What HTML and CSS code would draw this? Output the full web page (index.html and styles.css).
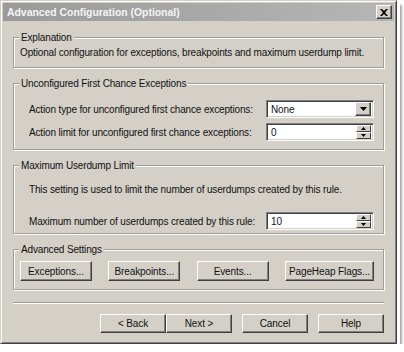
FILE: index.html
```html
<!DOCTYPE html>
<html lang="en">
<head>
    <meta charset="UTF-8">
    <title>Advanced Configuration (Optional)</title>
    <link rel="stylesheet" href="styles.css">
</head>
<body>
    <div class="window">
        <div class="titlebar">
            <span class="titlebar__text">Advanced Configuration (Optional)</span>
            <button class="titlebar__close" aria-label="Close">
                <svg width="8" height="7" viewBox="0 0 8 7"><path d="M0 0h2l2 2 2-2h2L5 3.5 8 7H6L4 5 2 7H0l3-3.5z" fill="#000"/></svg>
            </button>
        </div>

        <div class="dialog">
            <fieldset class="group group--explain">
                <legend>Explanation</legend>
                <div class="group__body">
                    <p class="group__text">Optional configuration for exceptions, breakpoints and maximum userdump limit.</p>
                </div>
            </fieldset>

            <fieldset class="group group--exceptions">
                <legend>Unconfigured First Chance Exceptions</legend>
                <div class="group__body">
                    <div class="form-row">
                        <label>Action type for unconfigured first chance exceptions:</label>
                        <div class="field combo">
                            <span class="field__value">None</span>
                            <span class="combo__btn">
                                <svg width="7" height="4" viewBox="0 0 7 4"><path d="M0 0h7L3.5 4z" fill="#000"/></svg>
                            </span>
                        </div>
                    </div>
                    <div class="form-row">
                        <label>Action limit for unconfigured first chance exceptions:</label>
                        <div class="field spin">
                            <span class="field__value">0</span>
                            <span class="spin__btns">
                                <span class="spin__btn"><svg width="5" height="3" viewBox="0 0 5 3"><path d="M2.5 0L5 3H0z" fill="#000"/></svg></span>
                                <span class="spin__btn"><svg width="5" height="3" viewBox="0 0 5 3"><path d="M0 0h5L2.5 3z" fill="#000"/></svg></span>
                            </span>
                        </div>
                    </div>
                </div>
            </fieldset>

            <fieldset class="group group--userdump">
                <legend>Maximum Userdump Limit</legend>
                <div class="group__body">
                    <p class="group__text">This setting is used to limit the number of userdumps created by this rule.</p>
                    <div class="form-row">
                        <label>Maximum number of userdumps created by this rule:</label>
                        <div class="field spin">
                            <span class="field__value">10</span>
                            <span class="spin__btns">
                                <span class="spin__btn"><svg width="5" height="3" viewBox="0 0 5 3"><path d="M2.5 0L5 3H0z" fill="#000"/></svg></span>
                                <span class="spin__btn"><svg width="5" height="3" viewBox="0 0 5 3"><path d="M0 0h5L2.5 3z" fill="#000"/></svg></span>
                            </span>
                        </div>
                    </div>
                </div>
            </fieldset>

            <fieldset class="group group--advanced">
                <legend>Advanced Settings</legend>
                <div class="group__body button-row">
                    <button class="button button--adv">Exceptions...</button>
                    <button class="button button--adv">Breakpoints...</button>
                    <button class="button button--adv">Events...</button>
                    <button class="button button--adv button--wide">PageHeap Flags...</button>
                </div>
            </fieldset>

            <div class="separator"></div>

            <div class="nav">
                <div class="nav__pair">
                    <button class="button button--nav">&lt; Back</button>
                    <button class="button button--nav">Next &gt;</button>
                </div>
                <button class="button button--nav">Cancel</button>
                <button class="button button--nav">Help</button>
            </div>
        </div>
    </div>
</body>
</html>
```

FILE: styles.css
```css
:root {
    --clr-face: #d4d0c8;
    --clr-shadow: #808080;
    --clr-dark: #404040;
    --clr-light: #ffffff;
    --clr-etch: #a09c96;
    --font-family: "Liberation Sans", Arial, sans-serif;
}

* {
    margin: 0;
    padding: 0;
    box-sizing: border-box;
}

body {
    background: #ffffff;
    font-family: var(--font-family);
    font-size: 10px;
    letter-spacing: -0.15px;
    color: #111;
}

/* Window frame */
.window {
    width: 397px;
    height: 344px;
    background: var(--clr-face);
    border: 1px solid;
    border-color: var(--clr-face) var(--clr-dark) var(--clr-dark) var(--clr-face);
    box-shadow: inset 1px 1px var(--clr-light), inset -1px -1px var(--clr-shadow),
                3px 3px 0 #ffffff, 5px 5px 2px rgba(0, 0, 0, 0.35);
    padding: 2px;
    display: flex;
    flex-direction: column;
}

.titlebar {
    height: 18px;
    background: linear-gradient(to right, #9a9a9a, #b6b6b6);
    display: flex;
    align-items: center;
    justify-content: space-between;
    padding: 0 2px 0 4px;
}

.titlebar__text {
    color: #f4f4f4;
    font-weight: 700;
    font-size: 10.4px;
    letter-spacing: 0;
}

.titlebar__close {
    width: 16px;
    height: 14px;
    background: var(--clr-face);
    border: 1px solid;
    border-color: var(--clr-light) var(--clr-dark) var(--clr-dark) var(--clr-light);
    box-shadow: inset -1px -1px var(--clr-shadow);
    display: flex;
    align-items: center;
    justify-content: center;
}

.dialog {
    flex: 1;
    padding: 10px 10px 0;
    display: flex;
    flex-direction: column;
}

/* Group boxes */
.group {
    border: 1px solid var(--clr-etch);
    box-shadow: inset 1px 1px var(--clr-light), 1px 1px var(--clr-light);
    padding: 0;
    min-width: 0;
}

.group legend {
    margin-left: 5px;
    padding: 0 2px;
    line-height: 13px;
    background: var(--clr-face);
}

.group + .group {
    margin-top: 9px;
}

.group--explain .group__body {
    padding: 2px 6px 8px 6px;
}

.group--exceptions .group__body {
    padding: 10px 9px 8px 15px;
}

.group--userdump .group__body {
    padding: 11px 9px 3px 15px;
}

.group--advanced .group__body {
    padding: 5px 9px 8px 6px;
}

.group__text {
    line-height: 13px;
    white-space: nowrap;
}

.group--userdump .group__text {
    margin-bottom: 16px;
}

.form-row {
    display: grid;
    grid-template-columns: 1fr 108px;
    align-items: center;
}

.form-row label {
    white-space: nowrap;
}

.form-row + .form-row {
    margin-top: 5px;
}

/* Inputs */
.field {
    height: 18px;
    background: #ffffff;
    border: 1px solid;
    border-color: var(--clr-shadow) var(--clr-light) var(--clr-light) var(--clr-shadow);
    box-shadow: inset 1px 1px var(--clr-dark), inset -1px -1px var(--clr-face);
    display: flex;
    align-items: center;
    padding: 2px 2px 2px 4px;
}

.field__value {
    flex: 1;
}

.combo__btn {
    width: 16px;
    height: 14px;
    background: var(--clr-face);
    border: 1px solid;
    border-color: var(--clr-light) var(--clr-dark) var(--clr-dark) var(--clr-light);
    box-shadow: inset -1px -1px var(--clr-shadow);
    display: flex;
    align-items: center;
    justify-content: center;
}

.spin__btns {
    width: 15px;
    height: 14px;
    display: flex;
    flex-direction: column;
}

.spin__btn {
    flex: 1;
    background: var(--clr-face);
    border: 1px solid;
    border-color: var(--clr-light) var(--clr-dark) var(--clr-dark) var(--clr-light);
    display: flex;
    align-items: center;
    justify-content: center;
}

/* Buttons */
.button {
    height: 20px;
    padding: 0;
    white-space: nowrap;
    background: var(--clr-face);
    border: 1px solid;
    border-color: var(--clr-light) var(--clr-dark) var(--clr-dark) var(--clr-light);
    box-shadow: inset -1px -1px var(--clr-shadow);
    font-family: inherit;
    font-size: 10px;
    letter-spacing: -0.1px;
    color: #111;
}

.button-row {
    display: flex;
    justify-content: space-between;
}

.button--adv {
    width: 72px;
}

.button--wide {
    width: 89px;
}

.separator {
    margin-top: 12px;
    border-top: 1px solid var(--clr-etch);
    border-bottom: 1px solid var(--clr-light);
}

.nav {
    margin-top: 10px;
    display: flex;
    justify-content: flex-end;
    gap: 10px;
}

.nav__pair {
    display: flex;
}

.button--nav {
    width: 66px;
    height: 19px;
}
```
